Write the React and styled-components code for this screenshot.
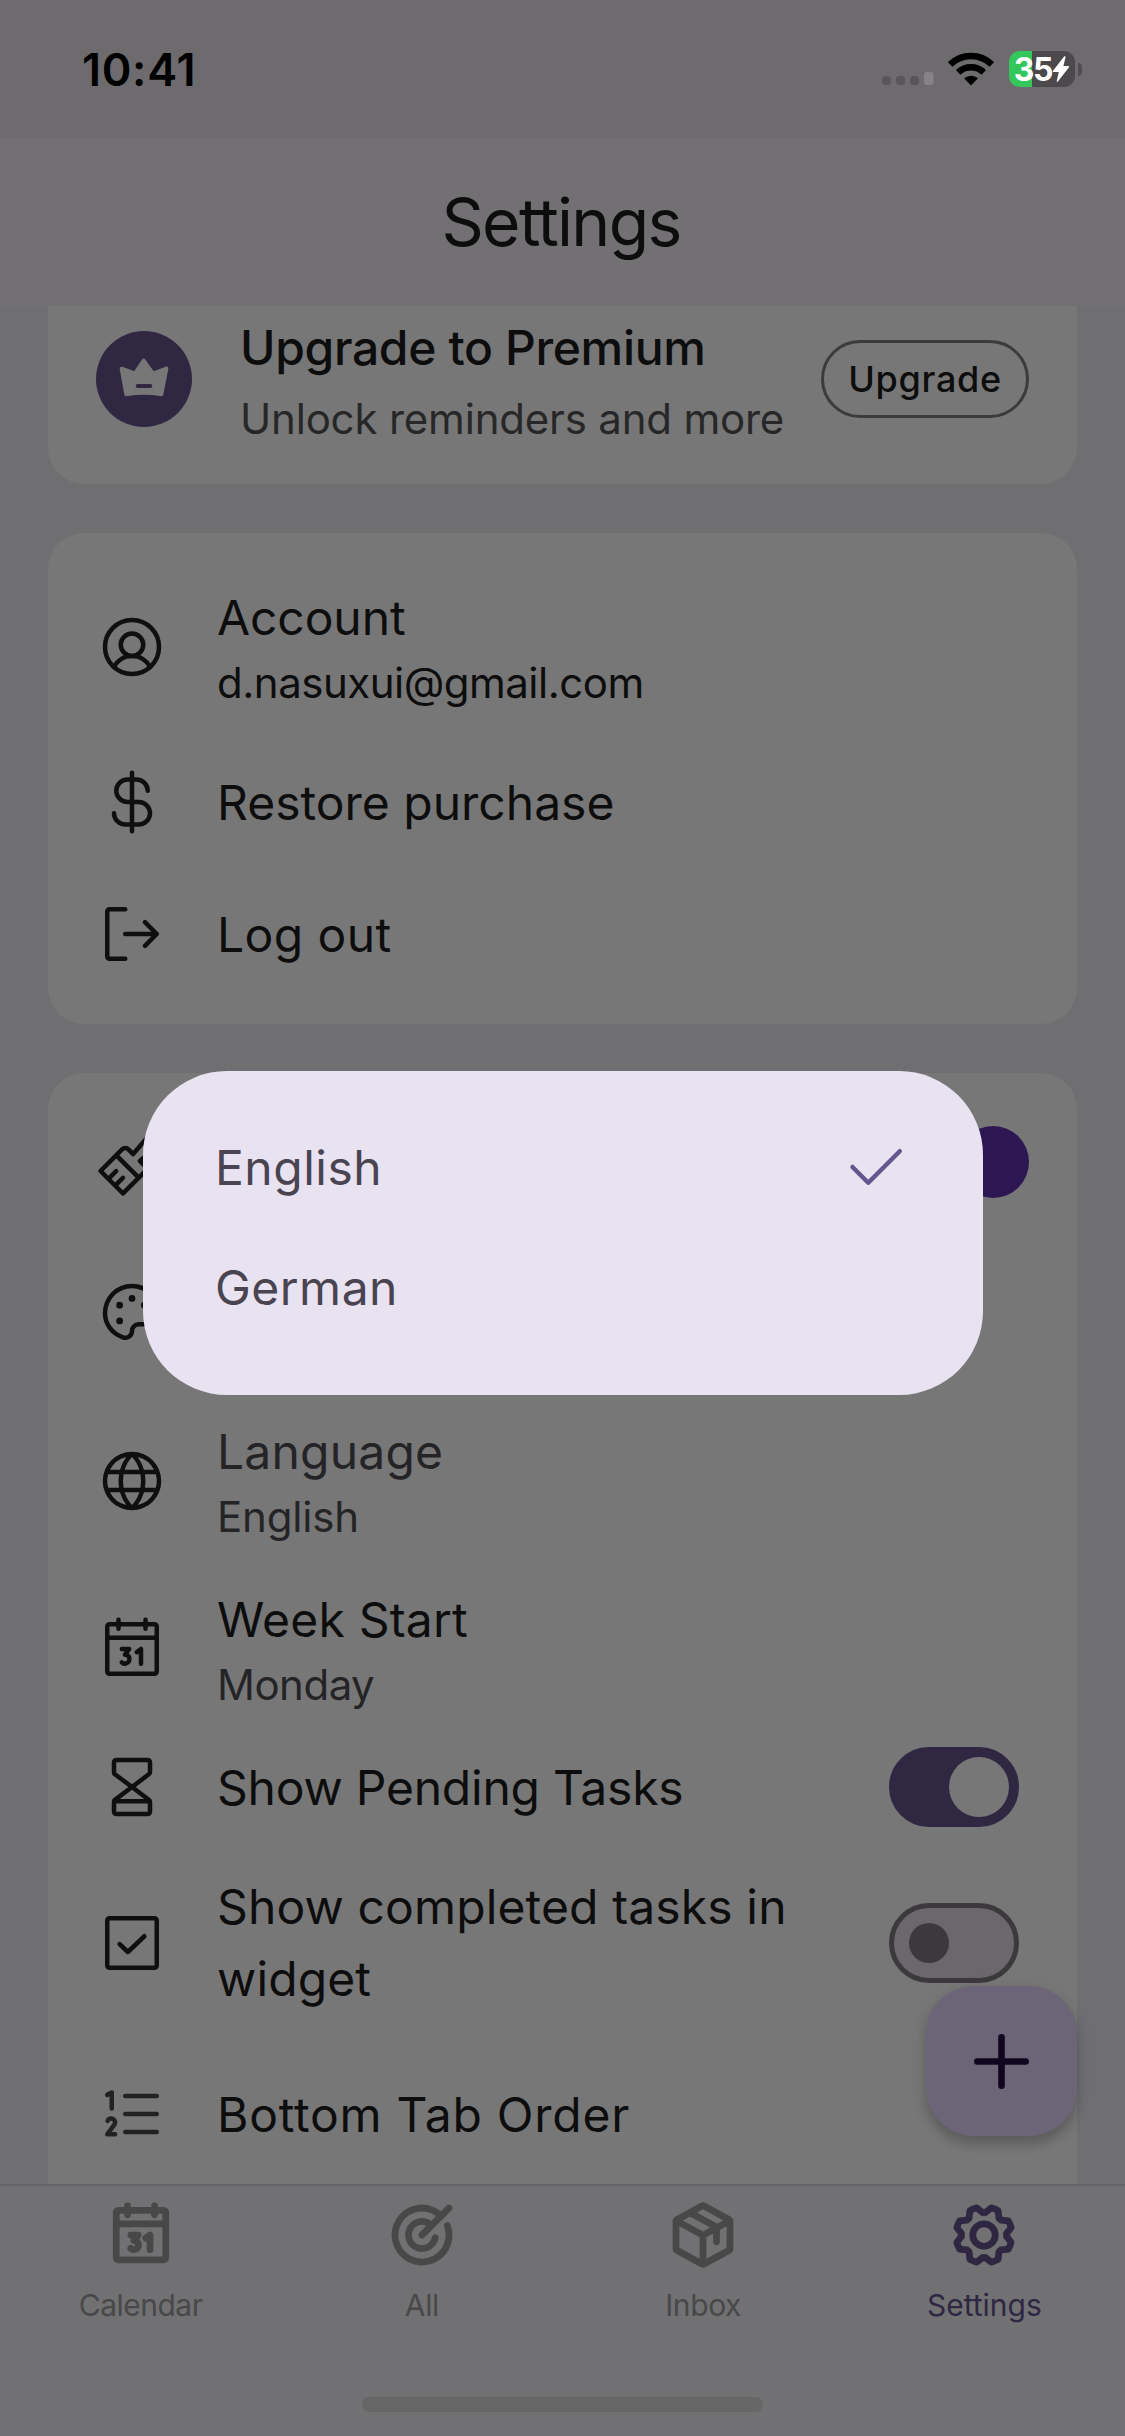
import React from 'react'
import styled, { createGlobalStyle } from 'styled-components'
import { PiGearBold, PiGlobe, PiPackageBold, PiPaintBrushHousehold, PiPalette, PiTargetBold } from 'react-icons/pi'

const GlobalStyle = createGlobalStyle`
  * {
    box-sizing: border-box;
  }

  body {
    margin: 0;
    background: #6f6f72;
    font-family: Inter, 'Liberation Sans', sans-serif;
  }
`

const Screen = styled.div`
  position: relative;
  display: flex;
  flex-direction: column;
  width: 1125px;
  height: 2436px;
  overflow: hidden;
  background: #6f6f72;
  color: #0d0d0e;
`

const StatusBar = styled.div`
  display: flex;
  flex: none;
  justify-content: space-between;
  align-items: center;
  height: 138px;
  padding: 0 43px 0 82px;
  background: #6d6b6e;
`

const Clock = styled.div`
  color: #000;
  font-size: 45px;
  font-weight: 600;
  letter-spacing: 0.7px;
`

const StatusIcons = styled.div`
  display: flex;
  align-items: center;

  svg {
    display: block;
    flex: none;
  }
`

const Battery = styled.div`
  display: flex;
  align-items: center;
  justify-content: center;
  width: 66px;
  height: 36px;
  margin-left: 15px;
  border-radius: 11px;
  background: linear-gradient(to right, #34c759 23px, #4b494c 23px);
  color: #fff;
  font-size: 32px;
  font-weight: 700;
  letter-spacing: -1.4px;
`

const BatteryCap = styled.div`
  width: 4px;
  height: 13px;
  margin-left: 3px;
  border-radius: 0 5px 5px 0;
  background: #4f4d50;
`

const Header = styled.header`
  display: flex;
  flex: none;
  align-items: center;
  justify-content: center;
  height: 168px;
  background: #727073;
`

const Title = styled.h1`
  margin: 0;
  padding-right: 3px;
  font-size: 66px;
  font-weight: 400;
  letter-spacing: -1.7px;
`

const Content = styled.main`
  flex: none;
  height: 1878px;
  padding: 0 48px;
  overflow: hidden;
`

const Card = styled.section`
  margin-bottom: 49px;
  padding: ${props => props.$padding || '0 48px'};
  border-radius: 36px;
  background: #777;
`

const PremiumCard = styled(Card)`
  display: flex;
  align-items: center;
  height: 210px;
  margin-top: -32px;
`

const CrownBadge = styled.div`
  flex: none;
  width: 96px;
  height: 96px;
  border-radius: 50%;
  background: #302742;

  svg {
    display: block;
  }
`

const PremiumText = styled.div`
  flex: 1;
  margin-left: 48px;
  padding-top: 7px;
  line-height: 71px;
  white-space: nowrap;
`

const PremiumTitle = styled.div`
  font-size: 48px;
  font-weight: 500;
  letter-spacing: -0.35px;
`

const PremiumSubtitle = styled.div`
  color: #272728;
  font-size: 42px;
  letter-spacing: -0.2px;
`

const UpgradeButton = styled.button`
  width: 208px;
  height: 78px;
  padding: 0;
  border: 3px solid #3b3a3c;
  border-radius: 39px;
  background: transparent;
  color: #0d0d0e;
  font: 500 36px Inter, sans-serif;
  letter-spacing: 0.7px;
`

const Row = styled.div`
  display: flex;
  align-items: center;
  height: ${props => props.$height}px;

  > svg {
    flex: none;
    display: block;
    color: ${props => (props.$soft ? '#222224' : '#0f0f10')};
  }
`

const RowText = styled.div`
  flex: 1;
  margin-left: 48px;
  padding-left: 1px;
  padding-top: ${props => (props.$double ? 6 : 0)}px;
`

const RowTitle = styled.div`
  color: ${props => (props.$muted ? '#242426' : 'inherit')};
  font-size: 48px;
  line-height: ${props => props.$line || 65}px;
  letter-spacing: ${props => props.$spacing || 0}px;
`

const RowSubtitle = styled.div`
  color: ${props => (props.$strong ? 'inherit' : '#242426')};
  font-size: 42px;
  line-height: 65px;
  letter-spacing: ${props => props.$spacing || 0}px;
`

const Swatch = styled.div`
  width: 72px;
  height: 72px;
  margin-left: auto;
  border-radius: 50%;
  background: #2d1752;
`

const Toggle = styled.div`
  display: flex;
  flex: none;
  align-items: center;
  justify-content: ${props => (props.$on ? 'flex-end' : 'flex-start')};
  width: 130px;
  height: 80px;
  margin-right: 10px;
  padding: ${props => (props.$on ? '0 5px' : '0 15px')};
  border: 5px solid ${props => (props.$on ? '#302742' : '#3b393b')};
  border-radius: 40px;
  background: ${props => (props.$on ? '#302742' : '#6c676c')};
`

const Thumb = styled.div`
  width: ${props => (props.$on ? 60 : 40)}px;
  height: ${props => (props.$on ? 60 : 40)}px;
  border-radius: 50%;
  background: ${props => (props.$on ? '#777' : '#3b393b')};
`

const Fab = styled.button`
  position: absolute;
  top: 1986px;
  right: 48px;
  display: flex;
  align-items: center;
  justify-content: center;
  width: 151px;
  height: 150px;
  padding: 0;
  border: 0;
  border-radius: 48px;
  background: #6c6577;
  box-shadow: 0 8px 12px rgba(0, 0, 0, 0.2), 0 2px 20px rgba(0, 0, 0, 0.06);
`

const TabBar = styled.nav`
  display: flex;
  flex: none;
  flex-direction: column;
  align-items: center;
  height: 252px;
  border-top: 2px solid #646366;
  background: #717173;
`

const Tabs = styled.div`
  display: flex;
  width: 100%;
  padding-top: 13px;
`

const Tab = styled.div`
  display: flex;
  flex: 1;
  flex-direction: column;
  align-items: center;
  color: ${props => (props.$active ? '#2f2742' : '#484849')};

  svg {
    display: block;
  }
`

const TabLabel = styled.div`
  margin-top: 16px;
  font-size: 30px;
  line-height: 36px;
  letter-spacing: ${props => props.$spacing || 0}px;
`

const HomeIndicator = styled.div`
  width: 401px;
  height: 15px;
  margin-top: 74px;
  border-radius: 8px;
  background: #666667;
`

const Dialog = styled.div`
  position: absolute;
  top: 1071px;
  left: 143px;
  width: 840px;
  height: 324px;
  padding: 36px 72px;
  border-radius: 84px;
  background: #e9e3f1;
`

const Option = styled.div`
  display: flex;
  align-items: center;
  justify-content: space-between;
  height: 120px;
  color: #4a4451;
  font-size: 48px;
  letter-spacing: 0.5px;

  svg {
    display: block;
    color: #65558f;
  }
`

const Icon = ({ size = 72, stroke = 16, children }) => (
  <svg width={size} height={size} viewBox="0 0 256 256" fill="none" stroke="currentColor"
    strokeWidth={stroke} strokeLinecap="round" strokeLinejoin="round">
    {children}
  </svg>
)

const UserCircleIcon = () => (
  <Icon>
    <circle cx="128" cy="128" r="96" />
    <circle cx="128" cy="120" r="40" />
    <path d="M63.8 199.4a72 72 0 0 1 128.4 0" />
  </Icon>
)

const DollarIcon = () => (
  <Icon>
    <path d="M128 24v208M184 88a40 40 0 0 0-40-40h-32a40 40 0 0 0 0 80h40a40 40 0 0 1 0 80h-48a40 40 0 0 1-40-40" />
  </Icon>
)

const SignOutIcon = () => (
  <Icon>
    <path d="M174 86l42 42-42 42M104 128h112M104 216H48a8 8 0 0 1-8-8V48a8 8 0 0 1 8-8h56" />
  </Icon>
)

const CalendarIcon = ({ stroke }) => (
  <Icon stroke={stroke}>
    <rect x="40" y="40" width="176" height="176" rx="8" />
    <path d="M176 24v32M80 24v32M40 88h176M92 128h26l-15 20a16 16 0 1 1-11.3 27.3M145 139l15-11v52" />
  </Icon>
)

const HourglassIcon = () => (
  <Icon>
    <path d="M128 128L67.2 82.4A8 8 0 0 1 64 76V40a8 8 0 0 1 8-8h112a8 8 0 0 1 8 8v35.6a8 8 0 0 1-3.2 6.4z" />
    <path d="M128 128l-60.8 45.6A8 8 0 0 0 64 180v36a8 8 0 0 0 8 8h112a8 8 0 0 0 8-8v-35.6a8 8 0 0 0-3.2-6.4zM66 179h124" />
  </Icon>
)

const CheckSquareIcon = () => (
  <Icon>
    <rect x="40" y="40" width="176" height="176" rx="8" />
    <path d="M172 104l-58.7 56L84 132" />
  </Icon>
)

const ListNumbersIcon = () => (
  <Icon>
    <path d="M104 128h112M104 64h112M104 192h112M40 60l16-8v56M41.1 152.6a14 14 0 1 1 24.9 12.6L40 200h28" />
  </Icon>
)

const CheckIcon = () => (
  <Icon>
    <path d="M216 72L104 184l-56-56" />
  </Icon>
)

const CrownIcon = () => (
  <svg width="96" height="96" viewBox="18 18 288 288">
    <path d="M95 131l40 15 26-39 28 39 40-15-15 77q-53-9-105 0z" fill="#777" stroke="#777"
      strokeWidth="12" strokeLinejoin="round" />
    <path d="M143 183h38" stroke="#302742" strokeWidth="12" strokeLinecap="round" />
  </svg>
)

const PlusIcon = () => (
  <svg width="55" height="55" viewBox="0 0 55 55" stroke="#12051f" strokeWidth="6.6" strokeLinecap="round">
    <path d="M27.5 3.3v48.4M3.3 27.5h48.4" />
  </svg>
)

const SignalIcon = () => (
  <svg width="66" height="34" viewBox="0 0 66 34">
    <g fill="#585659">
      <rect x="0" y="24" width="9" height="9" rx="3.5" />
      <rect x="14" y="24" width="9" height="9" rx="3.5" />
      <rect x="28" y="24" width="9" height="9" rx="3.5" />
    </g>
    <rect x="42" y="20" width="9.5" height="13" rx="3" fill="#858386" />
  </svg>
)

const WifiIcon = () => (
  <svg width="46" height="34" viewBox="0 0 46 34">
    <path d="M23 33.5l-7-7.2a10.5 10.5 0 0 1 14 0z" />
    <g fill="none" stroke="#000" strokeWidth="6.4">
      <path d="M10.2 20.4a18.6 18.6 0 0 1 25.6 0" />
      <path d="M2.2 12.4a29.8 29.8 0 0 1 41.6 0" />
    </g>
  </svg>
)

const BoltIcon = () => (
  <svg width="18" height="26" viewBox="0 0 18 26" fill="#fff">
    <path d="M12.3.3L1 14.8q-.7 1.2.6 1.2h5.2L4.7 25.2q.3 1 1.2.2L17 11.2q.7-1.2-.6-1.2h-5L13.6.9q-.3-1-1.3-.6z" />
  </svg>
)

const App = () => (
  <>
    <GlobalStyle />
    <Screen>
      <StatusBar>
        <Clock>10:41</Clock>
        <StatusIcons>
          <SignalIcon />
          <WifiIcon />
          <Battery>35<BoltIcon /></Battery>
          <BatteryCap />
        </StatusIcons>
      </StatusBar>

      <Header>
        <Title>Settings</Title>
      </Header>

      <Content>
        <PremiumCard>
          <CrownBadge><CrownIcon /></CrownBadge>
          <PremiumText>
            <PremiumTitle>Upgrade to Premium</PremiumTitle>
            <PremiumSubtitle>Unlock reminders and more</PremiumSubtitle>
          </PremiumText>
          <UpgradeButton>Upgrade</UpgradeButton>
        </PremiumCard>

        <Card $padding="25px 48px 24px">
          <Row $height={178}>
            <UserCircleIcon />
            <RowText $double>
              <RowTitle $spacing={-0.1}>Account</RowTitle>
              <RowSubtitle $strong $spacing={-0.5}>d.nasuxui@gmail.com</RowSubtitle>
            </RowText>
          </Row>
          <Row $height={132}>
            <DollarIcon />
            <RowText><RowTitle>Restore purchase</RowTitle></RowText>
          </Row>
          <Row $height={132}>
            <SignOutIcon />
            <RowText><RowTitle $spacing={0.4}>Log out</RowTitle></RowText>
          </Row>
        </Card>

        <Card $padding="19px 48px 60px">
          <Row $height={140}>
            <PiPaintBrushHousehold size={72} />
            <Swatch />
          </Row>
          <Row $height={162}>
            <PiPalette size={72} />
          </Row>
          <Row $height={174}>
            <PiGlobe size={72} />
            <RowText $double>
              <RowTitle $muted $spacing={0.2}>Language</RowTitle>
              <RowSubtitle $spacing={-0.2}>English</RowSubtitle>
            </RowText>
          </Row>
          <Row $height={162}>
            <CalendarIcon />
            <RowText $double>
              <RowTitle $spacing={0.2}>Week Start</RowTitle>
              <RowSubtitle $spacing={-0.5}>Monday</RowSubtitle>
            </RowText>
          </Row>
          <Row $height={114}>
            <HourglassIcon />
            <RowText><RowTitle $spacing={-0.22}>Show Pending Tasks</RowTitle></RowText>
            <Toggle $on><Thumb $on /></Toggle>
          </Row>
          <Row $height={198}>
            <CheckSquareIcon />
            <RowText><RowTitle $line={72} $spacing={0.13}>Show completed tasks in widget</RowTitle></RowText>
            <Toggle><Thumb /></Toggle>
          </Row>
          <Row $height={144} $soft>
            <ListNumbersIcon />
            <RowText><RowTitle $spacing={0.75}>Bottom Tab Order</RowTitle></RowText>
          </Row>
        </Card>
      </Content>

      <TabBar>
        <Tabs>
          <Tab>
            <CalendarIcon stroke={24} />
            <TabLabel $spacing={-0.5}>Calendar</TabLabel>
          </Tab>
          <Tab>
            <PiTargetBold size={72} />
            <TabLabel $spacing={-0.4}>All</TabLabel>
          </Tab>
          <Tab>
            <PiPackageBold size={72} />
            <TabLabel $spacing={-0.4}>Inbox</TabLabel>
          </Tab>
          <Tab $active>
            <PiGearBold size={72} />
            <TabLabel>Settings</TabLabel>
          </Tab>
        </Tabs>
        <HomeIndicator />
      </TabBar>

      <Fab><PlusIcon /></Fab>

      <Dialog>
        <Option>English<CheckIcon /></Option>
        <Option>German</Option>
      </Dialog>
    </Screen>
  </>
)

export default App
